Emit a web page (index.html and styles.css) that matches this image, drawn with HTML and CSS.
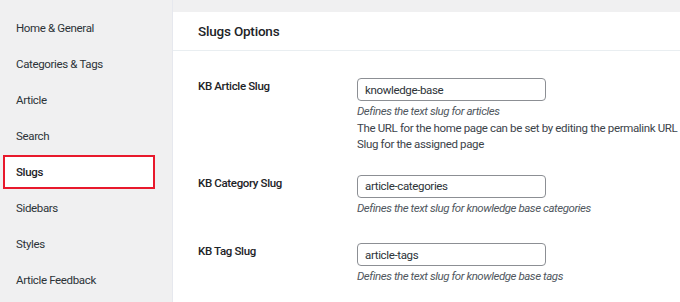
FILE: index.html
```html
<!DOCTYPE html>
<html lang="en">
<head>
<meta charset="utf-8">
<title>Slugs Options</title>
<link rel="stylesheet" href="styles.css">
</head>
<body>
<div class="layout">
  <nav class="sidebar">
    <a class="nav-item">Home &amp; General</a>
    <a class="nav-item">Categories &amp; Tags</a>
    <a class="nav-item">Article</a>
    <a class="nav-item">Search</a>
    <a class="nav-item active">Slugs</a>
    <a class="nav-item">Sidebars</a>
    <a class="nav-item">Styles</a>
    <a class="nav-item">Article Feedback</a>
  </nav>
  <main class="panel">
    <header class="panel-head">Slugs Options</header>
    <div class="panel-body">
      <div class="row row-first">
        <div class="label">KB Article Slug</div>
        <div class="field">
          <div class="input">knowledge-base</div>
          <div class="desc"><em>Defines the text slug for articles</em><br>The URL for the home page can be set by editing the permalink URL<br>Slug for the assigned page</div>
        </div>
      </div>
      <div class="row">
        <div class="label">KB Category Slug</div>
        <div class="field">
          <div class="input">article-categories</div>
          <div class="desc"><em>Defines the text slug for knowledge base categories</em></div>
        </div>
      </div>
      <div class="row row-last">
        <div class="label">KB Tag Slug</div>
        <div class="field">
          <div class="input">article-tags</div>
          <div class="desc"><em>Defines the text slug for knowledge base tags</em></div>
        </div>
      </div>
    </div>
  </main>
</div>
</body>
</html>
```

FILE: styles.css
```css
* { box-sizing: border-box; }
html, body {
  margin: 0;
  padding: 0;
  background: #f0f0f1;
  font-family: Roboto, "Noto Sans", sans-serif;
  font-size: 11.5px;
  letter-spacing: -0.35px;
  color: #1d2327;
  overflow: hidden;
}
.layout {
  display: flex;
  width: 680px;
  height: 302px;
}
.sidebar {
  width: 173px;
  flex: none;
  padding-top: 10px;
  display: flex;
  flex-direction: column;
  border-right: 1px solid #e6e8ee;
}
.nav-item {
  display: flex;
  align-items: center;
  height: 36px;
  padding-left: 16px;
  color: #2c3338;
  font-size: 11.5px;
}
.nav-item.active {
  background: #fff;
  border: 2px solid #e8192c;
  margin: 1px 17px 1px 3px;
  height: 34px;
  padding-left: 11px;
  font-weight: 500;
  color: #1d2327;
}
.panel {
  flex: 1;
  margin-top: 12px;
  background: #fff;
}
.panel-head {
  height: 39px;
  display: flex;
  align-items: center;
  padding-left: 25px;
  font-size: 13.5px;
  font-weight: 500;
  letter-spacing: -0.2px;
  border-bottom: 1px solid #e9eef1;
}
.panel-body {
  padding: 0 0 0 25px;
}
.row {
  display: grid;
  grid-template-columns: 159px 1fr;
  padding-top: 22px;
}
.row-first { padding-top: 27px; }
.row-last { padding-top: 27px; }
.label {
  font-weight: 500;
  font-size: 11.5px;
  padding-top: 1px;
}
.input {
  width: 189px;
  height: 23px;
  border: 1px solid #8c8f94;
  border-radius: 4px;
  padding: 0 0 0 7px;
  display: flex;
  align-items: center;
  font-size: 11.5px;
  color: #2c3338;
}
.desc {
  margin-top: 2px;
  line-height: 16.5px;
  font-size: 11.5px;
  color: #3c434a;
  white-space: nowrap;
}
.desc em { color: #50575e; letter-spacing: -0.45px; }
```
